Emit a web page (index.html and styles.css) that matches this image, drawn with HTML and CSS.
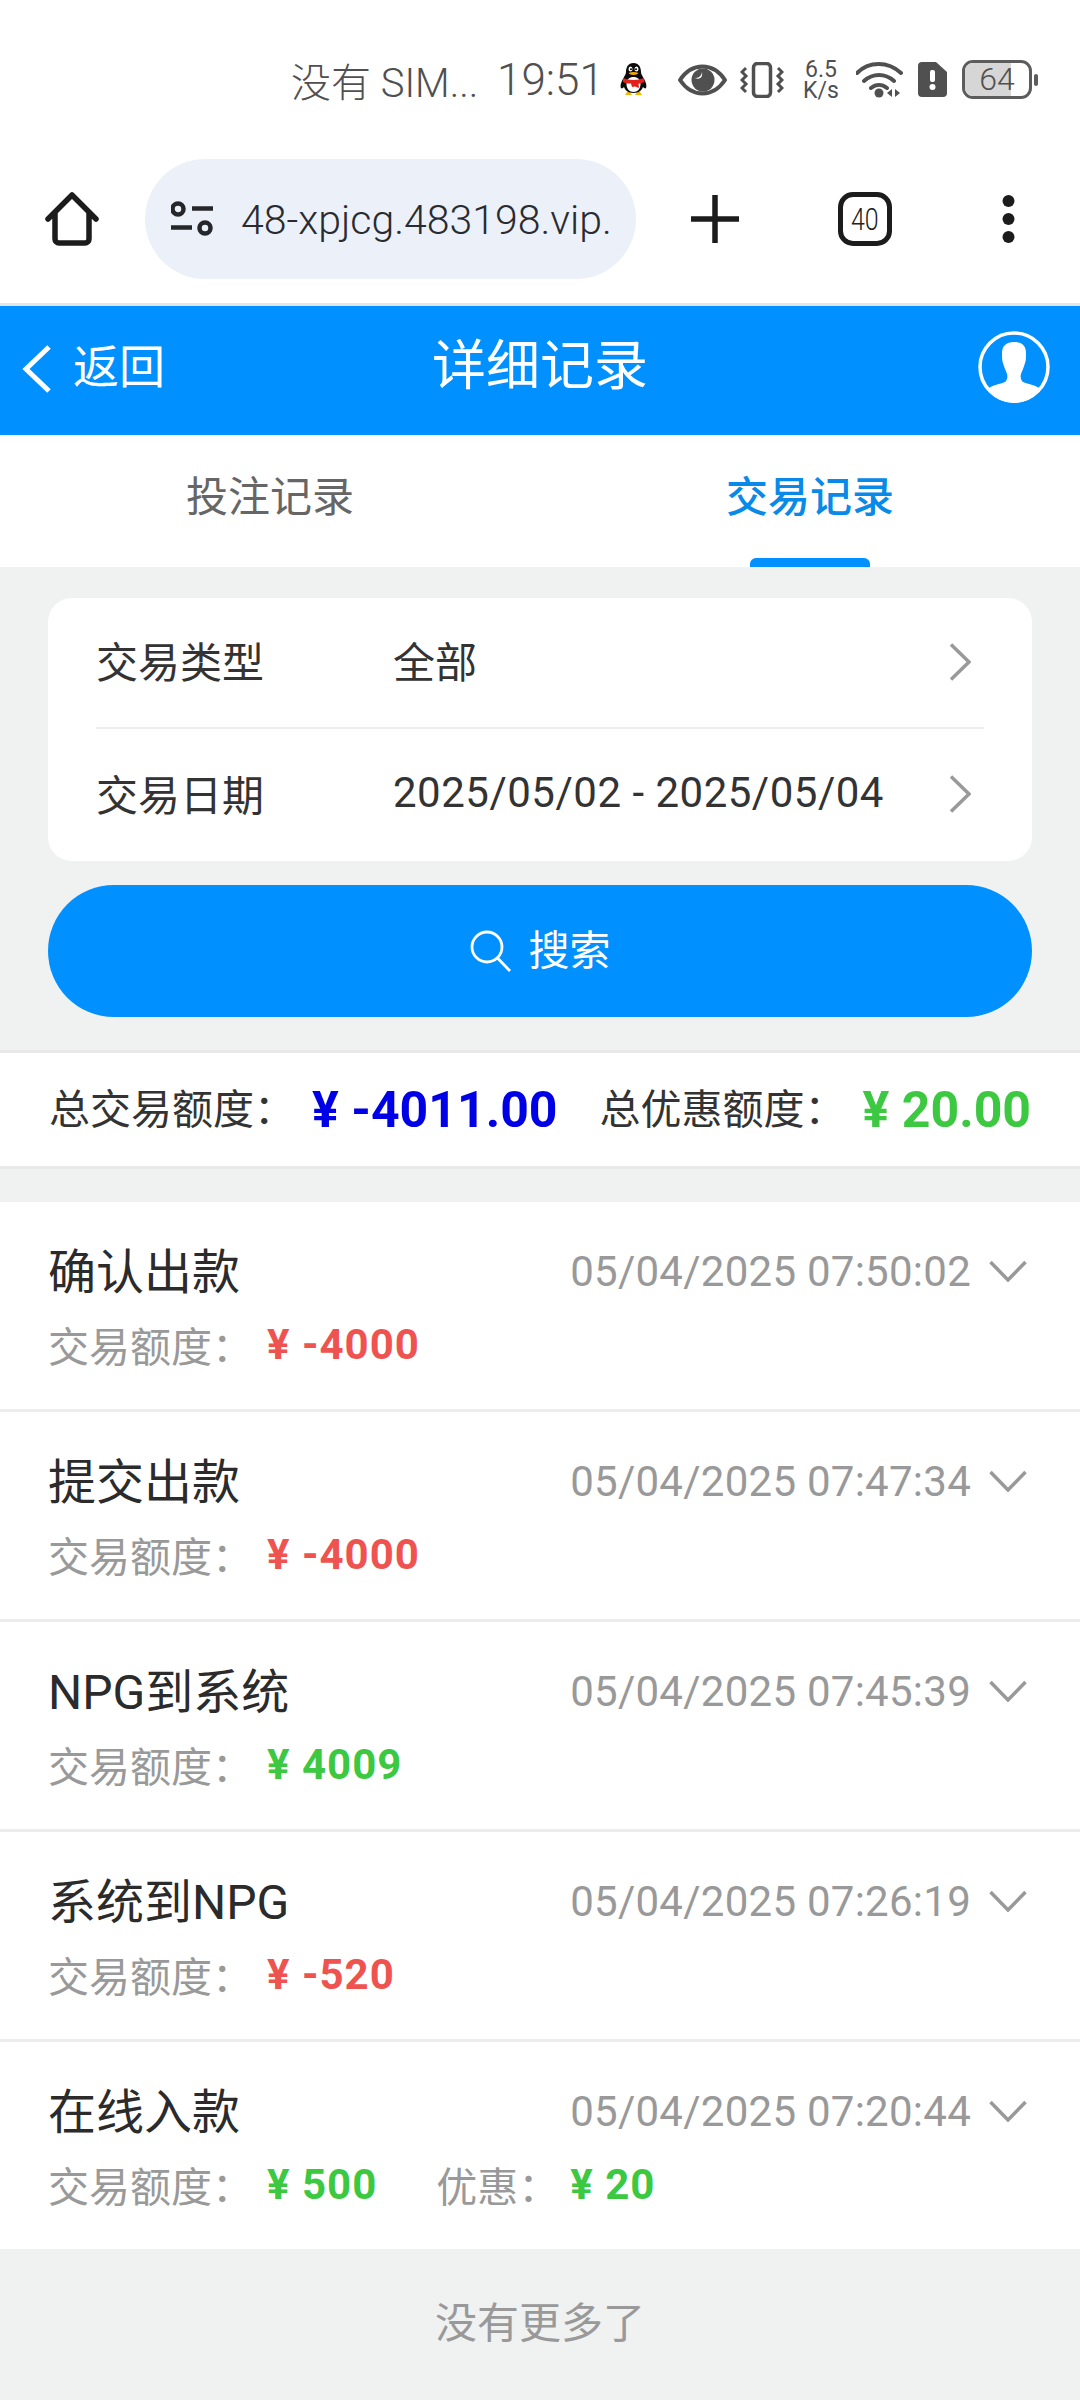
FILE: index.html
```html
<!DOCTYPE html>
<html lang="zh-CN">
<head>
    <meta charset="UTF-8">
    <title>详细记录</title>
    <link rel="stylesheet" href="styles.css">
</head>
<body>
    <!-- Phone status bar -->
    <div class="status-bar">
        <span class="carrier">没有 SIM...</span>
        <span class="clock">19:51</span>
        <svg class="qq" width="27" height="33" viewBox="0 0 27 33">
            <path d="M5 32h7l-2-3H7zM15 32h7l-2-3h-3z" fill="#f5b800"/>
            <path d="M13.500 0C8 0 6 4.500 6 9c0 2-1 3-2.500 6C1 19 0 23 1 25c1 1 2 0 3-1 1 3 4 6 9.500 6s8.500-3 9.500-6c1 1 2 2 3 1 1-2 0-6-2.500-10C22 12 21 11 21 9c0-4.500-2-9-7.500-9z" fill="#0b0b0b"/>
            <path d="M13.500 14c-4 0-7 2-7 7 0 5 3 8 7 8s7-3 7-8c0-5-3-7-7-7z" fill="#fff"/>
            <ellipse cx="10.500" cy="6" rx="2" ry="2.600" fill="#fff"/>
            <ellipse cx="16.500" cy="6" rx="2" ry="2.600" fill="#fff"/>
            <circle cx="11" cy="6.300" r="1" fill="#000"/>
            <circle cx="16" cy="6.300" r="1" fill="#000"/>
            <path d="M8.500 10c3-1.500 7-1.500 10 0-1.500 2.500-8.500 2.500-10 0z" fill="#f5a800"/>
            <path d="M3 15c6 2.500 15 2.500 21 0l.5 4c-2 1-4 1.500-6 1.700l.5 4.300-4-1.500-3 .5-1-3.500c-3 0-6-.5-8-1.500z" fill="#e3211c"/>
        </svg>
        <svg class="eye" width="49" height="32" viewBox="0 0 49 32">
            <path d="M2 16C8 7 15 2.500 24.500 2.500S41 7 47 16c-6 9-12.500 13.500-22.500 13.500S8 25 2 16z" fill="none" stroke="#505050" stroke-width="4" stroke-linejoin="round"/>
            <circle cx="25" cy="16" r="11.500" fill="#505050"/>
            <path d="M15 13c3 2 8 1 9-5 1 5-2 9-9 5z" fill="#fff"/>
        </svg>
        <svg class="shake" width="44" height="36" viewBox="0 0 44 36">
            <rect x="13.500" y="1.500" width="17" height="33" rx="4" fill="none" stroke="#505050" stroke-width="3.500"/>
            <path d="M6 6 2 10l4 4-4 4 4 4-4 4 4 4M38 6l4 4-4 4 4 4-4 4 4 4-4 4" fill="none" stroke="#505050" stroke-width="3"/>
        </svg>
        <div class="speed"><span>6.5</span><span>K/s</span></div>
        <svg class="wifi" width="48" height="36" viewBox="0 0 48 36">
            <path d="M2 11C14-1 33-1 46 11M9 19c9-8 21-8 30 0M16 26c5-4 11-4 16 0" transform="translate(-1 0)" fill="none" stroke="#505050" stroke-width="4" stroke-linecap="round"/>
            <circle cx="23" cy="31" r="4.500" fill="#505050"/>
            <path d="M36 27v8l-5-4zM39 27v8l5-4z" fill="#505050"/>
        </svg>
        <svg class="sim" width="29" height="35" viewBox="0 0 29 35">
            <path d="M4 0h14l11 10v21a4 4 0 0 1-4 4H4a4 4 0 0 1-4-4V4a4 4 0 0 1 4-4z" fill="#505050"/>
            <rect x="12" y="8" width="5" height="12" rx="2" fill="#fff"/>
            <circle cx="14.500" cy="25" r="3" fill="#fff"/>
        </svg>
        <div class="battery">
            <div class="battery-fill"></div>
            <span class="battery-num">64</span>
        </div>
        <div class="battery-nub"></div>
    </div>

    <!-- Browser toolbar -->
    <div class="toolbar">
        <svg class="home-icon" width="54" height="54" viewBox="0 0 54 54">
            <path d="M3 27 27 3l24 24M10 21v26a4 4 0 0 0 4 4h26a4 4 0 0 0 4-4V21" fill="none" stroke="#1c1c1c" stroke-width="5.500" stroke-linecap="round" stroke-linejoin="round"/>
        </svg>
        <div class="url-pill">
            <svg width="44" height="38" viewBox="0 0 44 38">
                <circle cx="7" cy="9" r="5.500" fill="none" stroke="#26272b" stroke-width="4.500"/>
                <circle cx="34" cy="28" r="5.500" fill="none" stroke="#26272b" stroke-width="4.500"/>
                <path d="M21 8.500h21M0 27.500h21" stroke="#26272b" stroke-width="4.500"/>
            </svg>
            <div class="url-text">48-xpjcg.483198.vip.</div>
        </div>
        <svg class="plus-icon" width="48" height="48" viewBox="0 0 48 48">
            <path d="M24 0v48M0 24h48" stroke="#1c1c1c" stroke-width="5.500"/>
        </svg>
        <div class="tab-count"><span>40</span></div>
        <svg class="more-icon" width="15" height="48" viewBox="0 0 15 48">
            <circle cx="7.500" cy="6" r="6" fill="#1c1c1c"/>
            <circle cx="7.500" cy="24" r="6" fill="#1c1c1c"/>
            <circle cx="7.500" cy="42" r="6" fill="#1c1c1c"/>
        </svg>
    </div>

    <header class="top-nav">
        <div class="back">
            <svg width="30" height="48" viewBox="0 0 30 48">
                <path d="M27 2 4 24l23 22" fill="none" stroke="#fff" stroke-width="5"/>
            </svg>
            <span>返回</span>
        </div>
        <h1>详细记录</h1>
        <svg class="avatar" width="72" height="72" viewBox="0 0 72 72">
            <circle cx="36" cy="36" r="34" fill="none" stroke="#fff" stroke-width="3.500"/>
            <path d="M36 11c-8 0-12 4-12 11 0 4 0 8 1 10 1 4 3 8 4 11 1 3 0 6-2 8-5 2-12 3-18 7a33 33 0 0 0 54 0c-6-4-13-5-18-7-2-2-3-5-2-8 1-3 3-7 4-11 1-2 1-6 1-10 0-7-4-11-12-11z" fill="#fff"/>
        </svg>
    </header>

    <nav class="tabs">
        <div class="tab">投注记录</div>
        <div class="tab tab-active">交易记录</div>
    </nav>

    <section class="search-panel">
        <div class="filter-card">
            <div class="filter-row">
                <span class="filter-label">交易类型</span>
                <span class="filter-value">全部</span>
                <svg class="filter-arrow" width="22" height="38" viewBox="0 0 22 38">
                    <path d="M2 1.500 20 19 2 36.500" fill="none" stroke="#999" stroke-width="3.500"/>
                </svg>
            </div>
            <div class="filter-row">
                <span class="filter-label">交易日期</span>
                <span class="filter-value date-range">2025/05/02 - 2025/05/04</span>
                <svg class="filter-arrow" width="22" height="38" viewBox="0 0 22 38">
                    <path d="M2 1.500 20 19 2 36.500" fill="none" stroke="#999" stroke-width="3.500"/>
                </svg>
            </div>
        </div>
        <button class="search-btn" type="button">
            <svg width="42" height="42" viewBox="0 0 42 42">
                <circle cx="17" cy="17" r="15" fill="none" stroke="#fff" stroke-width="2.800"/>
                <path d="M27.500 28 40 41" stroke="#fff" stroke-width="2.800"/>
            </svg>
            <span>搜索</span>
        </button>
    </section>

    <section class="summary">
        <span class="summary-label">总交易额度：</span>
        <span class="summary-num blue">¥ -4011.00</span>
        <span class="summary-label">总优惠额度：</span>
        <span class="summary-num green">¥ 20.00</span>
    </section>

    <section class="records">
        <div class="record">
            <div class="record-top">
                <span class="record-name">确认出款</span>
                <span class="record-time">05/04/2025 07:50:02</span>
                <svg class="record-arrow" width="38" height="22" viewBox="0 0 38 22"><path d="M1.500 2 19 20 36.500 2" fill="none" stroke="#999" stroke-width="3.500"/></svg>
            </div>
            <div class="record-sub">
                <span>交易额度：</span><span class="record-num red">¥ -4000</span>
            </div>
        </div>
        <div class="record">
            <div class="record-top">
                <span class="record-name">提交出款</span>
                <span class="record-time">05/04/2025 07:47:34</span>
                <svg class="record-arrow" width="38" height="22" viewBox="0 0 38 22"><path d="M1.500 2 19 20 36.500 2" fill="none" stroke="#999" stroke-width="3.500"/></svg>
            </div>
            <div class="record-sub">
                <span>交易额度：</span><span class="record-num red">¥ -4000</span>
            </div>
        </div>
        <div class="record">
            <div class="record-top">
                <span class="record-name">NPG到系统</span>
                <span class="record-time">05/04/2025 07:45:39</span>
                <svg class="record-arrow" width="38" height="22" viewBox="0 0 38 22"><path d="M1.500 2 19 20 36.500 2" fill="none" stroke="#999" stroke-width="3.500"/></svg>
            </div>
            <div class="record-sub">
                <span>交易额度：</span><span class="record-num green">¥ 4009</span>
            </div>
        </div>
        <div class="record">
            <div class="record-top">
                <span class="record-name">系统到NPG</span>
                <span class="record-time">05/04/2025 07:26:19</span>
                <svg class="record-arrow" width="38" height="22" viewBox="0 0 38 22"><path d="M1.500 2 19 20 36.500 2" fill="none" stroke="#999" stroke-width="3.500"/></svg>
            </div>
            <div class="record-sub">
                <span>交易额度：</span><span class="record-num red">¥ -520</span>
            </div>
        </div>
        <div class="record">
            <div class="record-top">
                <span class="record-name">在线入款</span>
                <span class="record-time">05/04/2025 07:20:44</span>
                <svg class="record-arrow" width="38" height="22" viewBox="0 0 38 22"><path d="M1.500 2 19 20 36.500 2" fill="none" stroke="#999" stroke-width="3.500"/></svg>
            </div>
            <div class="record-sub">
                <span>交易额度：</span><span class="record-num green">¥ 500</span>
                <span class="record-bonus">优惠：</span><span class="record-num green">¥ 20</span>
            </div>
        </div>
    </section>

    <div class="no-more">没有更多了</div>
</body>
</html>
```

FILE: styles.css
```css
* {
    box-sizing: border-box;
}
body {
    font-family: Roboto, "Noto Sans CJK SC", sans-serif;
    background-color: #f0f1f1;
    color: #333;
    margin: 0;
}

/* Status bar */
.status-bar {
    display: flex;
    align-items: center;
    height: 159px;
    padding-left: 291px;
    background: #fff;
    color: #505050;
}
.carrier {
    font-size: 40px;
    font-weight: 300;
    width: 206px;
    white-space: nowrap;
}
.clock {
    font-size: 44px;
    font-weight: 300;
    width: 123px;
    white-space: nowrap;
}
.eye {
    margin-left: 31px;
}
.shake {
    margin-left: 13px;
}
.speed {
    display: flex;
    flex-direction: column;
    align-items: center;
    width: 36px;
    margin-left: 19px;
    font-size: 23px;
    line-height: 21px;
}
.wifi {
    margin-left: 17px;
}
.sim {
    margin-left: 14px;
}
.battery {
    position: relative;
    width: 70px;
    height: 39px;
    margin-left: 15px;
    border: 3px solid #5c5c5c;
    border-radius: 11px;
    overflow: hidden;
}
.battery-fill {
    width: 46px;
    height: 100%;
    background: #d6d6d6;
}
.battery-num {
    position: absolute;
    left: 0;
    right: 0;
    top: 0;
    text-align: center;
    font-size: 32px;
    font-weight: 300;
    line-height: 33px;
}
.battery-nub {
    width: 4px;
    height: 12px;
    margin-left: 2px;
    border-radius: 2px;
    background: #5c5c5c;
}

/* Browser toolbar */
.toolbar {
    display: flex;
    align-items: center;
    height: 147px;
    padding: 0 0 24px 45px;
    background: #fff;
    border-bottom: 3px solid #e1e6ea;
}
.url-pill {
    display: flex;
    align-items: center;
    width: 491px;
    height: 120px;
    margin-left: 46px;
    padding: 0 20px 0 26px;
    border-radius: 60px;
    background: #ecf1f9;
}
.url-text {
    flex: 1;
    margin: 2px 0 0 26px;
    white-space: nowrap;
    font-size: 41px;
    font-weight: 300;
    color: #2a2b30;
}
.plus-icon {
    margin-left: 55px;
}
.tab-count {
    display: flex;
    align-items: center;
    justify-content: center;
    width: 54px;
    height: 54px;
    margin-left: 99px;
    border: 5.5px solid #1c1c1c;
    border-radius: 15px;
    font-size: 32px;
    font-weight: 300;
    color: #222;
}
.tab-count span {
    transform: scaleX(.78);
}
.more-icon {
    margin-left: 109px;
}

/* Page header */
.top-nav {
    position: relative;
    display: flex;
    align-items: center;
    justify-content: space-between;
    height: 129px;
    padding: 0 30px 8px 22px;
    background: #0090ff;
    color: #fff;
}
.top-nav h1 {
    position: absolute;
    left: 0;
    right: 0;
    top: 28px;
    margin: 0;
    text-align: center;
    font-size: 54px;
    font-weight: 400;
    line-height: 66px;
}
.back {
    display: flex;
    align-items: center;
    gap: 21px;
    font-size: 46px;
}
.back svg {
    margin-top: 4px;
}
.back span {
    margin-bottom: 8px;
}

/* Tabs */
.tabs {
    display: flex;
    height: 132px;
    background: #fff;
}
.tab {
    flex: 1;
    position: relative;
    padding-top: 35px;
    text-align: center;
    font-size: 42px;
    line-height: 56px;
    color: #666;
}
.tab-active {
    color: #0a8ae8;
    font-weight: 500;
}
.tab-active::after {
    content: "";
    position: absolute;
    left: 210px;
    bottom: 0;
    width: 120px;
    height: 9px;
    border-radius: 6px 6px 0 0;
    background: #0090ff;
}

/* Search filters */
.search-panel {
    padding: 31px 48px 33px;
}
.filter-card {
    padding: 0 48px;
    background: #fff;
    border-radius: 24px;
}
.filter-row {
    display: flex;
    align-items: center;
    height: 132px;
    padding-bottom: 6px;
    font-size: 42px;
    color: #333;
}
.filter-row:first-child {
    height: 131px;
    border-bottom: 2px solid #eee;
}
.filter-label {
    width: 297px;
}
.filter-value {
    flex: 1;
    white-space: nowrap;
}
.date-range {
    letter-spacing: .5px;
}
.filter-arrow {
    margin: 4px 13px 0 0;
}
.search-btn {
    display: flex;
    align-items: center;
    justify-content: center;
    gap: 17px;
    width: 100%;
    height: 132px;
    margin-top: 24px;
    border: none;
    border-radius: 66px;
    background: #0090ff;
    color: #fff;
    font-family: inherit;
    font-size: 41px;
}
.search-btn span {
    margin-bottom: 8px;
}

/* Totals */
.summary {
    display: flex;
    align-items: center;
    height: 119px;
    padding: 0 0 0 49px;
    background: #fff;
    border-top: 3px solid #e9e9e9;
    border-bottom: 3px solid #e9e9e9;
    font-size: 41px;
    white-space: nowrap;
}
.summary-label {
    margin-bottom: 7px;
    color: #333;
}
.summary-num {
    font-size: 50px;
    font-weight: 700;
    margin: 0 42px 0 17px;
}
.blue {
    color: #0000e6;
}
.green {
    color: #3cc840;
}
.red {
    color: #ef5350;
}

/* Record list */
.records {
    margin-top: 33px;
    background: #fff;
}
.record {
    height: 210px;
    padding: 0 48px;
    border-bottom: 3px solid #ececec;
}
.record:last-child {
    border-bottom: none;
    height: 207px;
}
.record-top {
    display: flex;
    align-items: center;
    padding-top: 31px;
    height: 107px;
}
.record-name {
    flex: 1;
    margin-bottom: 6px;
    font-size: 48px;
    color: #2b2b2b;
}
.record-time {
    font-size: 42px;
    letter-spacing: .26px;
    color: #999;
    white-space: nowrap;
}
.record-arrow {
    margin-left: 18px;
    margin-right: 5px;
}
.record-sub {
    display: flex;
    align-items: center;
    height: 56px;
    margin-top: 7px;
    font-size: 41px;
    color: #999;
}
.record-num {
    font-size: 42px;
    font-weight: 700;
    letter-spacing: 1px;
    margin-left: 14px;
}
.record-bonus {
    margin-left: 59px;
}
.record-bonus + .record-num {
    margin-left: 11px;
}
.no-more {
    height: 152px;
    padding-top: 47px;
    text-align: center;
    font-size: 42px;
    line-height: 56px;
    color: #999;
}
```
